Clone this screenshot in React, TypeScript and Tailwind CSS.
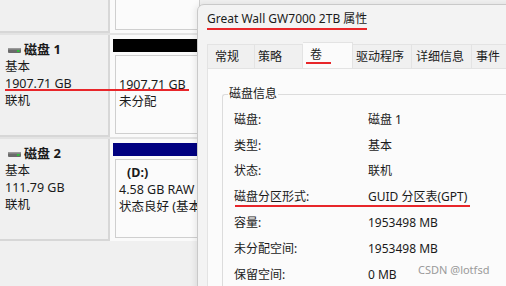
import React from 'react';

const FONT = { fontFamily: '"Noto Sans", "Noto Sans CJK SC", sans-serif' };

const DiskIcon = () => (
  <svg width="13" height="6" viewBox="0 0 13 6" className="mr-[3px] mb-[4px]">
    <rect x="0" y="0" width="13" height="5" rx="1" fill="#6b6b6b" />
    <rect x="0" y="0" width="13" height="1.5" fill="#9a9a9a" />
    <rect x="9" y="2" width="2.5" height="2" fill="#2fbf3a" />
  </svg>
);

const DiskRow = ({
  name,
  size,
  barColor,
  heightClass,
  children,
}: {
  name: string;
  size: string;
  barColor: string;
  heightClass: string;
  children: React.ReactNode;
}) => (
  <div className={`flex ${heightClass} border-t-2 border-[#e3e3e3]`}>
    <div className="w-[110px] shrink-0 bg-[#f0f0f0] border-r-2 border-b-2 border-[#d7d7d7] pl-[5px] pt-[4px] text-[12.5px] leading-[17px] text-[#1a1a1a]">
      <div className="flex items-end h-[19px] pl-[3px]">
        <DiskIcon />
        <span className="font-bold text-[13px]">{name}</span>
      </div>
      <div>基本</div>
      <div>{size}</div>
      <div>联机</div>
    </div>
    <div className="flex-1 bg-[#fafafa] pl-[3px] pt-[4px] pb-[3px] flex flex-col">
      <div className={`h-[13px] ${barColor}`} />
      <div className="mt-[3px] flex-1 ml-[2px] border border-[#cfcfcf] bg-[#fbfbfb] pl-[3px] pt-[4px] text-[12.5px] leading-[17px] text-[#1a1a1a]">
        {children}
      </div>
    </div>
  </div>
);

const Row = ({ label, value }: { label: string; value: string }) => (
  <div className="flex h-[25.8px] items-center">
    <div className="w-[145px] pl-[11px]">{label}</div>
    <div className="whitespace-nowrap">{value}</div>
  </div>
);

export default function App() {
  return (
    <div
      className="relative w-[506px] h-[286px] overflow-hidden bg-[#f0f0f0] text-[12px]"
      style={FONT}
    >
      {/* disk management background */}
      <div className="w-[200px]">
        <div className="flex h-[33px]">
          <div className="w-[110px] shrink-0 bg-[#f0f0f0] border-r-2 border-b-2 border-[#d7d7d7]" />
          <div className="flex-1 bg-[#fafafa] pl-[5px] pb-[3px]">
            <div className="h-full border border-t-0 border-[#cfcfcf] bg-[#fbfbfb]" />
          </div>
        </div>
        <DiskRow name="磁盘 1" size="1907.71 GB" barColor="bg-black" heightClass="h-[104px]">
          <div className="mt-[16px]">1907.71 GB</div>
          <div>未分配</div>
        </DiskRow>
        <DiskRow name="磁盘 2" size="111.79 GB" barColor="bg-[#000080]" heightClass="h-[104px]">
          <div className="pl-[8px] font-bold">(D:)</div>
          <div className="whitespace-nowrap">4.58 GB RAW</div>
          <div className="whitespace-nowrap">状态良好 (基本</div>
        </DiskRow>
      </div>

      {/* properties dialog */}
      <div className="absolute left-[197px] top-[4px] w-[330px] h-[300px] bg-[#f3f3f3] border border-[#c9c9c9] rounded-tl-[7px] shadow-[-2px_0_6px_rgba(0,0,0,0.08)]">
        <div className="h-[38px] pl-[9px] pt-[3px] text-[12px] leading-[21px] text-[#1a1a1a]">
          <span className="border-b-2 border-[#e8262a] pb-[1px]">Great Wall GW7000 2TB 属性</span>
        </div>
        <div className="flex pl-[9px] h-[25px] items-end text-[12px] text-[#1a1a1a]">
          <div className="w-[48px] h-[24px] pl-[7px] leading-[23px] bg-[#f0f0f0] border border-b-0 border-[#e3e3e3]">常规</div>
          <div className="w-[48px] h-[24px] pl-[3px] leading-[23px] bg-[#f0f0f0] border border-b-0 border-l-0 border-[#e3e3e3]">策略</div>
          <div className="relative w-[50px] h-[26px] pl-[7px] leading-[24px] bg-[#fbfbfb] border border-b-0 border-l-0 border-[#e3e3e3]">
            卷
            <div className="absolute left-[3px] top-[19px] w-[25px] h-[2px] bg-[#e8262a]" />
          </div>
          <div className="w-[59px] h-[24px] pl-[3px] leading-[23px] bg-[#f0f0f0] border border-b-0 border-l-0 border-[#e3e3e3]">驱动程序</div>
          <div className="w-[60px] h-[24px] pl-[4px] leading-[23px] bg-[#f0f0f0] border border-b-0 border-l-0 border-[#e3e3e3]">详细信息</div>
          <div className="w-[40px] h-[24px] pl-[4px] leading-[23px] bg-[#f0f0f0] border border-b-0 border-l-0 border-[#e3e3e3]">事件</div>
        </div>
        <div className="ml-[9px] h-[240px] bg-[#fbfbfb] border border-[#e3e3e3] pl-[14px] pt-[25px] text-[12px] text-[#1a1a1a]">
          <div className="relative border-t border-l border-[#dcdcdc] rounded-tl-[3px] h-[230px] pt-[12px]">
            <div className="absolute left-[5px] top-[-10px] bg-[#fbfbfb] px-[1px] leading-[18px]">磁盘信息</div>
            <Row label="磁盘:" value="磁盘 1" />
            <Row label="类型:" value="基本" />
            <Row label="状态:" value="联机" />
            <div className="relative">
              <Row label="磁盘分区形式:" value="GUID 分区表(GPT)" />
              <div className="absolute left-[12px] top-[21px] w-[235px] h-[2px] bg-[#e8262a]" />
            </div>
            <Row label="容量:" value="1953498 MB" />
            <Row label="未分配空间:" value="1953498 MB" />
            <Row label="保留空间:" value="0 MB" />
          </div>
        </div>
      </div>

      {/* annotation under disk 1 size */}
      <div className="absolute left-[5px] top-[89px] w-[184px] h-[2px] bg-[#e8262a]" />

      <div className="absolute left-[418px] top-[261px] text-[11px] leading-[18px] text-[#9a9a9a]">
        CSDN @lotfsd
      </div>
    </div>
  );
}
